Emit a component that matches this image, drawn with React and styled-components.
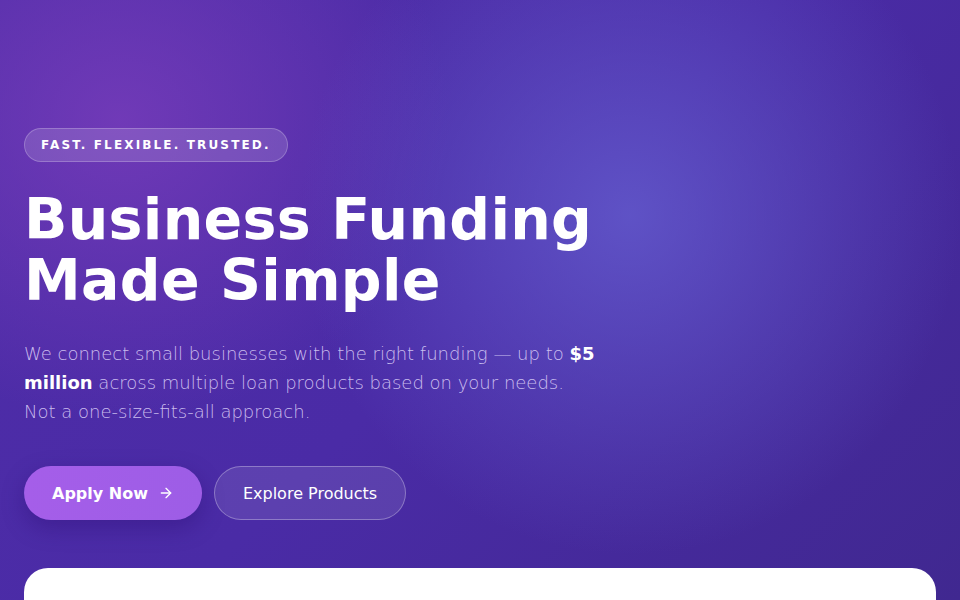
import React from 'react';
import styled, { createGlobalStyle } from 'styled-components';

const GlobalStyle = createGlobalStyle`
  * { box-sizing: border-box; }
  html, body { margin: 0; padding: 0; }
  body {
    font-family: "DejaVu Sans", sans-serif;
    background: #442a9c;
  }
`;

const Hero = styled.section`
  position: relative;
  height: 600px;
  overflow: hidden;
  padding: 128px 24px 0;
  background:
    radial-gradient(ellipse 330px 340px at 630px 215px, rgba(100, 92, 206, 0.8) 0%, rgba(100, 92, 206, 0) 100%),
    radial-gradient(ellipse 330px 300px at 120px 120px, rgba(118, 60, 186, 0.85) 0%, rgba(118, 60, 186, 0) 100%),
    linear-gradient(135deg, #4f2da8 0%, #4a2ba6 50%, #402890 100%);
`;

const Content = styled.div`
  max-width: 600px;
`;

const Badge = styled.span`
  display: inline-flex;
  align-items: center;
  height: 34px;
  padding: 0 16px;
  border-radius: 999px;
  background: rgba(255, 255, 255, 0.14);
  border: 1px solid rgba(255, 255, 255, 0.22);
  color: #fff;
  font-size: 12px;
  font-weight: 700;
  letter-spacing: 2.15px;
  text-transform: uppercase;
`;

const Title = styled.h1`
  margin: 27px 0 0;
  color: #fff;
  font-size: 57px;
  font-weight: 700;
  line-height: 61px;
  letter-spacing: 0.3px;
`;

const Lead = styled.p`
  margin: 28px 0 0;
  max-width: 572px;
  color: rgba(230, 222, 255, 0.82);
  font-size: 18px;
  font-weight: 300;
  line-height: 29px;

  strong {
    color: #fff;
    font-weight: 700;
  }
`;

const Actions = styled.div`
  display: flex;
  gap: 12px;
  margin-top: 40px;
`;

const Button = styled.button`
  display: inline-flex;
  align-items: center;
  justify-content: center;
  gap: 10px;
  height: 54px;
  padding: 0 ${p => (p.$primary ? '27px' : '28px')};
  border-radius: 999px;
  font-family: inherit;
  font-size: 16px;
  font-weight: ${p => (p.$primary ? 700 : 400)};
  color: #fff;
  cursor: pointer;
  border: 1px solid ${p => (p.$primary ? 'transparent' : 'rgba(255, 255, 255, 0.3)')};
  background: ${p => (p.$primary ? 'linear-gradient(90deg, #a55ee9, #9d5de6)' : 'rgba(255, 255, 255, 0.1)')};
  box-shadow: ${p => (p.$primary ? '0 8px 22px rgba(40, 10, 110, 0.35)' : 'none')};
`;

const Card = styled.div`
  margin-top: 48px;
  height: 80px;
  background: #fff;
  border-radius: 24px;
`;

const Arrow = () => (
  <svg width="16" height="16" viewBox="0 0 24 24" fill="none" stroke="currentColor" strokeWidth="2" strokeLinecap="round" strokeLinejoin="round">
    <path d="M5 12h14" />
    <path d="m12 5 7 7-7 7" />
  </svg>
);

export default function App() {
  return (
    <>
      <GlobalStyle />
      <Hero>
        <Content>
          <Badge>Fast. Flexible. Trusted.</Badge>
          <Title>
            Business Funding
            <br />
            Made Simple
          </Title>
          <Lead>
            We connect small businesses with the right funding — up to <strong>$5 million</strong> across multiple loan products based on your needs. Not a one-size-fits-all approach.
          </Lead>
          <Actions>
            <Button $primary>
              Apply Now <Arrow />
            </Button>
            <Button>Explore Products</Button>
          </Actions>
        </Content>
        <Card />
      </Hero>
    </>
  );
}
